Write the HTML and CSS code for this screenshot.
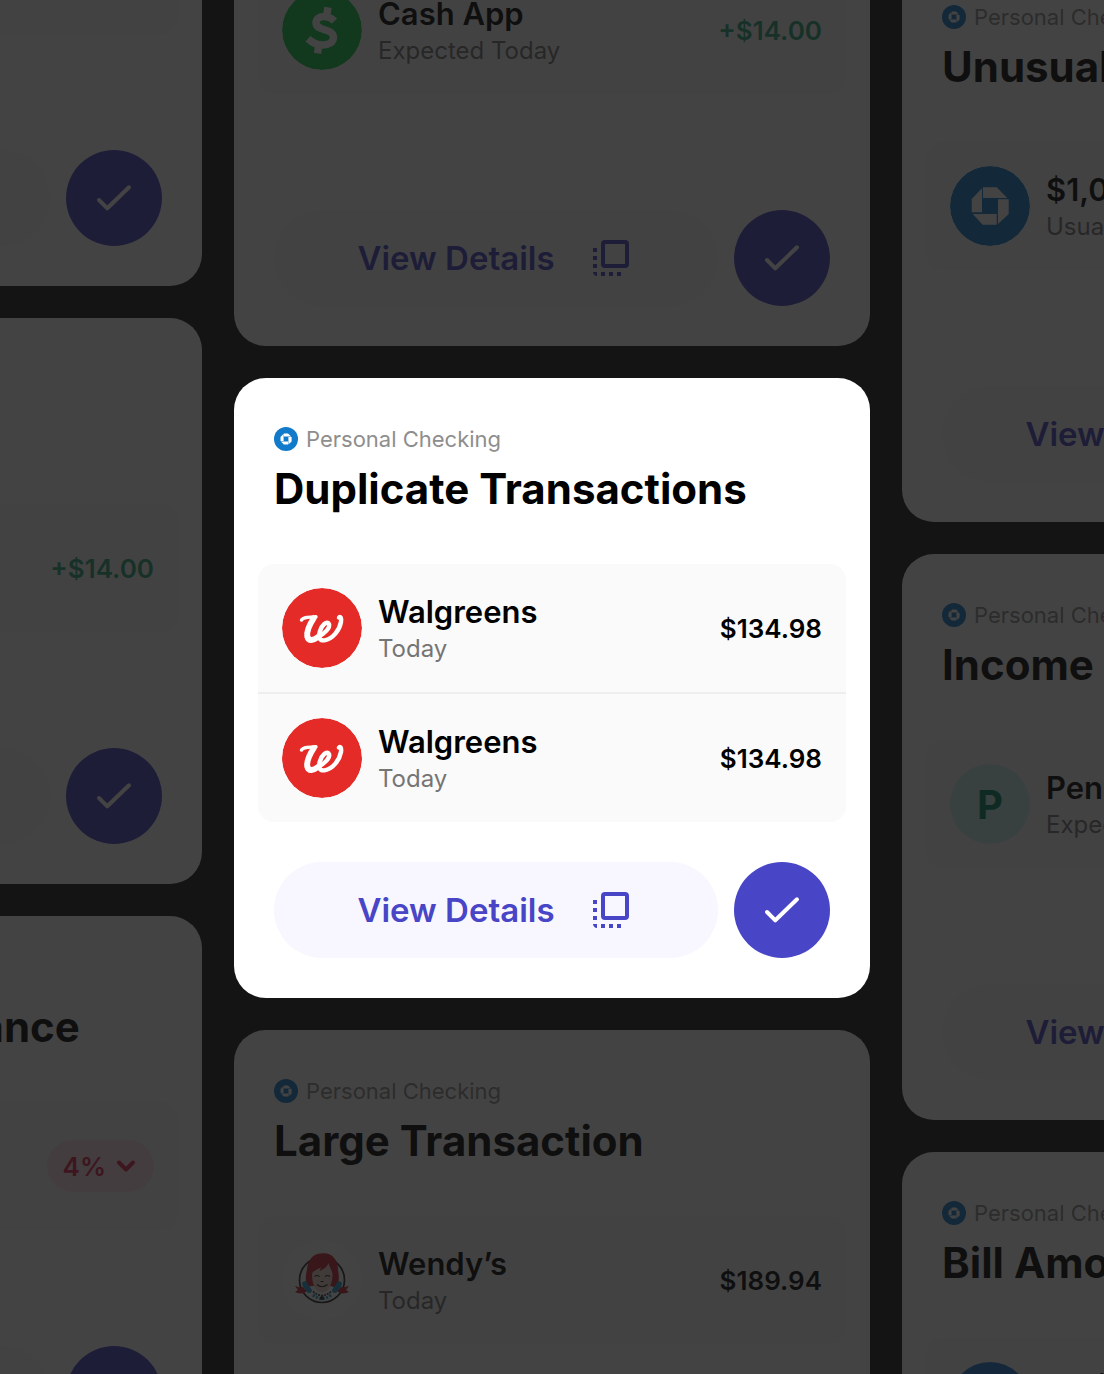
FILE: index.html
```html
<!DOCTYPE html>
<html lang="en">
<head>
  <meta charset="utf-8">
  <meta name="viewport" content="width=device-width, initial-scale=1">
  <title>Account insights</title>
  <link rel="stylesheet" href="styles.css">
</head>
<body>
  <svg class="sprite" aria-hidden="true">
    <symbol id="chase" viewBox="0 0 80 80">
      <circle cx="40" cy="40" r="40" fill="#117aca"/>
      <path fill="#fff" d="M33 21.3h13.7L57.3 32H33zM32 22.3v24H21.7V33zM22.7 48h24v10.7h-14zM48 33.3h10.7V48L48 58z"/>
    </symbol>
    <symbol id="walgreens" viewBox="0 0 80 80">
      <circle cx="40" cy="40" r="40" fill="#e52b27"/>
      <path fill="none" stroke="#fff" stroke-width="3.400" stroke-linecap="round" stroke-linejoin="round" d="M19.500 32C22 28.300 27 29.500 34 28.800"/>
      <path fill="none" stroke="#fff" stroke-width="6" stroke-linecap="round" stroke-linejoin="round" d="M31.500 30.500C28 36 24.500 44 25.300 48.500C26.500 53.500 31.500 52.500 36 49"/>
      <path fill="none" stroke="#fff" stroke-width="4.400" stroke-linecap="round" stroke-linejoin="round" d="M36 49C42 46 48.500 40 47 36C45 32.500 39.500 37 37.800 43.500C36 50 38 53 42.500 52.300C51 51 57.500 42 59 34C59.700 29.500 58 27.800 57 29.500"/>
    </symbol>
    <symbol id="cash" viewBox="0 0 80 80">
      <circle cx="40" cy="40" r="40" fill="#0bcb4a"/>
      <path fill="none" stroke="#fff" stroke-width="7.400" stroke-linejoin="round" d="M52.500 31C49 27.500 45 26.500 41.500 26.500C37 26.500 34 29 34 32.800C34 42 51.500 37.500 51.500 47.500C51.300 52 47 55 40.500 55C35 55 30.500 53 26 48.800M46 17.300L44.500 26M37 54.500L35.500 63.300"/>
    </symbol>
    <symbol id="wendys" viewBox="0 0 80 80">
      <circle cx="40" cy="40" r="40" fill="#fff"/>
      <circle cx="40" cy="40" r="22.500" fill="#fff" stroke="#2b2523" stroke-width="1.700"/>
      <path fill="#c8202f" d="M24.500 47C23 40 24 34 25 29C26 19 32 13.500 39 13.500C50 12 56 20 56 30C57.500 37 57 43 54 48L49 46L30 46z"/>
      <path fill="#f0d5c8" d="M30 34C31 30 36 30 39 27L37.500 31C42 29 45 27 46.500 23C48 29 51 31 50.500 36C50 44 47 52 40 52.500C33 52 30 44 30 34z"/>
      <path fill="#c8202f" d="M13 46C15 46 17 48 21 47L25 51C22 54 17 54 13 52L16 50zM67 46C65 46 63 48 59 47L55 51C58 54 63 54 67 52L64 50z"/>
      <path fill="#1f9bd0" d="M20 43C22 40 25 41 26 44L30 50C30 54 25 54 24 50L21 47zM60 43C58 40 55 41 54 44L50 50C50 54 55 54 56 50L59 47z"/>
      <path fill="none" stroke="#2b2523" stroke-width="1.200" d="M32.500 36.500q2.500-2 5 0M43 36.500q2.500-2 5 0M35 44.500q5 4.500 10.500 0M38.500 41.500h3"/>
      <path fill="none" stroke="#1f9bd0" stroke-width="3" stroke-dasharray="2 1.500" d="M31 55q9 7 18 0"/>
      <path fill="none" stroke="#2b2523" stroke-width="1.500" stroke-dasharray="2 1" d="M31 51.500q9 8 18 0"/>
      <circle cx="40" cy="58" r="2" fill="#2b2523"/>
    </symbol>
    <symbol id="open" viewBox="0 0 24 24">
      <path fill="currentColor" d="M3 7h2v2H3zM3 11h2v2H3zM3 15h2v2H3zM3 19h2v2C3.900 21 3 20.100 3 19zM7 19h2v2H7zM11 19h2v2h-2zM15 19h2v2h-2z"/>
      <rect x="8" y="4" width="12" height="12" rx="1" fill="none" stroke="currentColor" stroke-width="2"/>
    </symbol>
    <symbol id="check" viewBox="0 0 48 48">
      <path fill="none" stroke="currentColor" stroke-width="4" stroke-linecap="round" stroke-linejoin="round" d="M9 26l8.300 8.300L39 13.300"/>
    </symbol>
    <symbol id="chevron" viewBox="0 0 24 24">
      <path fill="none" stroke="currentColor" stroke-width="4" stroke-linecap="round" stroke-linejoin="round" d="M5 8.500l7 7 7-7"/>
    </symbol>
  </svg>

  <main class="board">
    <section class="column column--left">
      <article class="card">
        <header class="card__header">
          <p class="account"><svg class="account__logo"><use href="#chase"/></svg>Personal Checking</p>
          <h2 class="card__title">Upcoming Bill</h2>
        </header>
        <ul class="list">
          <li class="row">
            <svg class="avatar"><use href="#chase"/></svg>
            <div class="row__text"><span class="row__name">Chase</span><span class="row__note">Expected Today</span></div>
            <span class="row__amount">$48.20</span>
          </li>
        </ul>
        <div class="actions">
          <button class="details" type="button">View Details<svg class="icon"><use href="#open"/></svg></button>
          <button class="done" type="button" aria-label="Mark as done"><svg class="icon"><use href="#check"/></svg></button>
        </div>
      </article>
      <article class="card">
        <header class="card__header">
          <p class="account"><svg class="account__logo"><use href="#chase"/></svg>Personal Checking</p>
          <h2 class="card__title">Income</h2>
        </header>
        <ul class="list">
          <li class="row">
            <svg class="avatar"><use href="#cash"/></svg>
            <div class="row__text"><span class="row__name">Cash App</span><span class="row__note">Today</span></div>
            <span class="row__amount row__amount--in">+$14.00</span>
          </li>
        </ul>
        <div class="actions">
          <button class="details" type="button">View Details<svg class="icon"><use href="#open"/></svg></button>
          <button class="done" type="button" aria-label="Mark as done"><svg class="icon"><use href="#check"/></svg></button>
        </div>
      </article>
      <article class="card">
        <header class="card__header">
          <p class="account"><svg class="account__logo"><use href="#chase"/></svg>Personal Checking</p>
          <h2 class="card__title">Lower Savings Balance</h2>
        </header>
        <ul class="list">
          <li class="row">
            <svg class="avatar"><use href="#chase"/></svg>
            <div class="row__text"><span class="row__name">$1,024.00</span><span class="row__note">Today</span></div>
            <span class="trend">4%<svg class="trend__icon"><use href="#chevron"/></svg></span>
          </li>
        </ul>
        <div class="actions">
          <button class="details" type="button">View Details<svg class="icon"><use href="#open"/></svg></button>
          <button class="done" type="button" aria-label="Mark as done"><svg class="icon"><use href="#check"/></svg></button>
        </div>
      </article>
    </section>

    <section class="column column--center">
      <article class="card">
        <header class="card__header">
          <p class="account"><svg class="account__logo"><use href="#chase"/></svg>Personal Checking</p>
          <h2 class="card__title">Income Expected</h2>
        </header>
        <ul class="list">
          <li class="row">
            <svg class="avatar"><use href="#cash"/></svg>
            <div class="row__text"><span class="row__name">Cash App</span><span class="row__note">Expected Today</span></div>
            <span class="row__amount row__amount--in">+$14.00</span>
          </li>
        </ul>
        <div class="actions">
          <button class="details" type="button">View Details<svg class="icon"><use href="#open"/></svg></button>
          <button class="done" type="button" aria-label="Mark as done"><svg class="icon"><use href="#check"/></svg></button>
        </div>
      </article>
      <article class="card card--active">
        <header class="card__header">
          <p class="account"><svg class="account__logo"><use href="#chase"/></svg>Personal Checking</p>
          <h2 class="card__title">Duplicate Transactions</h2>
        </header>
        <ul class="list">
          <li class="row">
            <svg class="avatar"><use href="#walgreens"/></svg>
            <div class="row__text"><span class="row__name">Walgreens</span><span class="row__note">Today</span></div>
            <span class="row__amount">$134.98</span>
          </li>
          <li class="row">
            <svg class="avatar"><use href="#walgreens"/></svg>
            <div class="row__text"><span class="row__name">Walgreens</span><span class="row__note">Today</span></div>
            <span class="row__amount">$134.98</span>
          </li>
        </ul>
        <div class="actions">
          <button class="details" type="button">View Details<svg class="icon"><use href="#open"/></svg></button>
          <button class="done" type="button" aria-label="Mark as done"><svg class="icon"><use href="#check"/></svg></button>
        </div>
      </article>
      <article class="card">
        <header class="card__header">
          <p class="account"><svg class="account__logo"><use href="#chase"/></svg>Personal Checking</p>
          <h2 class="card__title">Large Transaction</h2>
        </header>
        <ul class="list">
          <li class="row">
            <svg class="avatar"><use href="#wendys"/></svg>
            <div class="row__text"><span class="row__name">Wendy’s</span><span class="row__note">Today</span></div>
            <span class="row__amount">$189.94</span>
          </li>
        </ul>
        <div class="actions">
          <button class="details" type="button">View Details<svg class="icon"><use href="#open"/></svg></button>
          <button class="done" type="button" aria-label="Mark as done"><svg class="icon"><use href="#check"/></svg></button>
        </div>
      </article>
    </section>

    <section class="column column--right">
      <article class="card">
        <header class="card__header">
          <p class="account"><svg class="account__logo"><use href="#chase"/></svg>Personal Checking</p>
          <h2 class="card__title">Unusual Balance</h2>
        </header>
        <ul class="list">
          <li class="row">
            <svg class="avatar"><use href="#chase"/></svg>
            <div class="row__text"><span class="row__name">$1,024.00</span><span class="row__note">Usually $2,400</span></div>
            <span class="trend">4%<svg class="trend__icon"><use href="#chevron"/></svg></span>
          </li>
        </ul>
        <div class="actions">
          <button class="details" type="button">View Details<svg class="icon"><use href="#open"/></svg></button>
          <button class="done" type="button" aria-label="Mark as done"><svg class="icon"><use href="#check"/></svg></button>
        </div>
      </article>
      <article class="card">
        <header class="card__header">
          <p class="account"><svg class="account__logo"><use href="#chase"/></svg>Personal Checking</p>
          <h2 class="card__title">Income Expected</h2>
        </header>
        <ul class="list">
          <li class="row">
            <span class="avatar avatar--letter">P</span>
            <div class="row__text"><span class="row__name">Pension</span><span class="row__note">Expected Today</span></div>
            <span class="row__amount row__amount--in">+$840.00</span>
          </li>
        </ul>
        <div class="actions">
          <button class="details" type="button">View Details<svg class="icon"><use href="#open"/></svg></button>
          <button class="done" type="button" aria-label="Mark as done"><svg class="icon"><use href="#check"/></svg></button>
        </div>
      </article>
      <article class="card">
        <header class="card__header">
          <p class="account"><svg class="account__logo"><use href="#chase"/></svg>Personal Checking</p>
          <h2 class="card__title">Bill Amount Changed</h2>
        </header>
        <ul class="list">
          <li class="row">
            <span class="avatar avatar--blue">V</span>
            <div class="row__text"><span class="row__name">Verizon</span><span class="row__note">Today</span></div>
            <span class="row__amount">$92.10</span>
          </li>
        </ul>
        <div class="actions">
          <button class="details" type="button">View Details<svg class="icon"><use href="#open"/></svg></button>
          <button class="done" type="button" aria-label="Mark as done"><svg class="icon"><use href="#check"/></svg></button>
        </div>
      </article>
    </section>
  </main>
</body>
</html>
```
FILE: styles.css
```css
* {
  box-sizing: border-box;
}

body {
  margin: 0;
  height: 100vh;
  overflow: hidden;
  background: #141414;
  color: #000;
  font-family: Inter, "Liberation Sans", sans-serif;
}

h2,
p,
ul {
  margin: 0;
  padding: 0;
}

.sprite {
  display: none;
}

/* Three staggered columns, the middle one centred in the window */
.board {
  display: grid;
  grid-template-columns: repeat(3, min(636px, calc(100vw - 64px)));
  justify-content: center;
  align-items: start;
  gap: 32px;
}

.column {
  display: grid;
  gap: 32px;
}

.column--left {
  margin-top: -280px;
}

.column--center {
  margin-top: -220px;
}

.column--right {
  margin-top: -44px;
}

.card {
  display: flex;
  flex-direction: column;
  min-height: 566px;
  padding: 48px 24px 40px;
  border-radius: 32px;
  background: #fff;
  opacity: 0.2;
}

.card--active {
  opacity: 1;
}

.card__header {
  padding: 0 16px;
  margin-bottom: 46px;
}

.account {
  display: flex;
  align-items: center;
  gap: 8px;
  margin-bottom: 8px;
  color: #8e8e8e;
  font-size: 22px;
  line-height: 26px;
}

.account__logo {
  width: 24px;
  height: 24px;
}

.card__title {
  font-size: 42px;
  font-weight: 700;
  line-height: 58px;
  white-space: nowrap;
}

.list {
  margin-bottom: 40px;
  border-radius: 16px;
  background: #fafafa;
  list-style: none;
}

.row {
  display: flex;
  align-items: center;
  gap: 16px;
  padding: 24px;
}

.row + .row {
  border-top: 2px solid #eee;
}

.avatar {
  display: flex;
  flex: none;
  align-items: center;
  justify-content: center;
  width: 80px;
  height: 80px;
  border-radius: 50%;
  font-size: 40px;
  font-weight: 700;
}

.avatar--letter {
  background: #cff2f0;
  color: #00845c;
}

.avatar--blue {
  background: #1c7ad6;
  color: #fff;
}

.row__text {
  display: flex;
  flex: 1;
  flex-direction: column;
}

.row__name {
  font-size: 31px;
  font-weight: 600;
  line-height: 42px;
}

.row__note {
  color: #757575;
  font-size: 24px;
  line-height: 32px;
}

.row__amount {
  font-size: 26px;
  font-weight: 600;
}

.row__amount--in {
  color: #27a577;
}

.trend {
  display: flex;
  align-items: center;
  gap: 8px;
  height: 52px;
  padding: 0 16px;
  border-radius: 26px;
  background: #ffe1e8;
  color: #e0204e;
  font-size: 26px;
  font-weight: 600;
}

.trend__icon {
  width: 24px;
  height: 24px;
}

.actions {
  display: flex;
  gap: 16px;
  margin-top: auto;
  padding: 0 16px;
}

.details,
.done {
  display: flex;
  align-items: center;
  justify-content: center;
  height: 96px;
  padding: 0;
  border: 0;
  border-radius: 48px;
  font-family: inherit;
  cursor: pointer;
}

.details {
  flex: 1;
  gap: 32px;
  background: #f8f7ff;
  color: #4845c6;
  font-size: 33px;
  font-weight: 600;
}

.done {
  flex: none;
  width: 96px;
  background: #4845c6;
  color: #fff;
}

.icon {
  width: 48px;
  height: 48px;
}
```
